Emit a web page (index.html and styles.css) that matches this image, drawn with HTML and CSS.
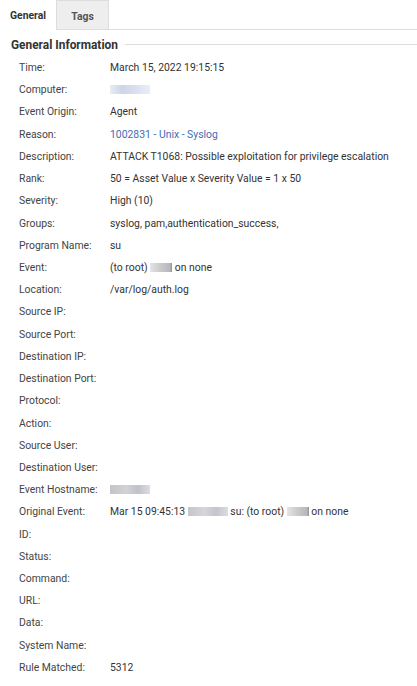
FILE: index.html
```html
<!DOCTYPE html>
<html>
<head>
<meta charset="utf-8">
<link rel="stylesheet" href="styles.css">
</head>
<body>
<div class="tabs">
  <div class="tab active">General</div>
  <div class="tab">Tags</div>
  <div class="tab-fill"></div>
</div>
<div class="section">
  <div class="heading"><span class="heading-text">General Information</span><span class="heading-line"></span></div>
  <div class="rows">
    <div class="row"><span class="label">Time:</span><span class="value">March 15, 2022 19:15:15</span></div>
    <div class="row"><span class="label">Computer:</span><span class="value"><span class="blur b-comp"></span></span></div>
    <div class="row"><span class="label">Event Origin:</span><span class="value">Agent</span></div>
    <div class="row"><span class="label">Reason:</span><span class="value link">1002831 - Unix - Syslog</span></div>
    <div class="row"><span class="label">Description:</span><span class="value">ATTACK T1068: Possible exploitation for privilege escalation</span></div>
    <div class="row"><span class="label">Rank:</span><span class="value">50 = Asset Value x Severity Value = 1 x 50</span></div>
    <div class="row"><span class="label">Severity:</span><span class="value">High (10)</span></div>
    <div class="row"><span class="label">Groups:</span><span class="value">syslog, pam,authentication_success,</span></div>
    <div class="row"><span class="label">Program Name:</span><span class="value">su</span></div>
    <div class="row"><span class="label">Event:</span><span class="value">(to root) <span class="blur b-user"></span> on none</span></div>
    <div class="row"><span class="label">Location:</span><span class="value">/var/log/auth.log</span></div>
    <div class="row"><span class="label">Source IP:</span><span class="value"></span></div>
    <div class="row"><span class="label">Source Port:</span><span class="value"></span></div>
    <div class="row"><span class="label">Destination IP:</span><span class="value"></span></div>
    <div class="row"><span class="label">Destination Port:</span><span class="value"></span></div>
    <div class="row"><span class="label">Protocol:</span><span class="value"></span></div>
    <div class="row"><span class="label">Action:</span><span class="value"></span></div>
    <div class="row"><span class="label">Source User:</span><span class="value"></span></div>
    <div class="row"><span class="label">Destination User:</span><span class="value"></span></div>
    <div class="row"><span class="label">Event Hostname:</span><span class="value"><span class="blur b-host"></span></span></div>
    <div class="row"><span class="label">Original Event:</span><span class="value">Mar 15 09:45:13 <span class="blur b-host2"></span> su: (to root) <span class="blur b-user"></span> on none</span></div>
    <div class="row"><span class="label">ID:</span><span class="value"></span></div>
    <div class="row"><span class="label">Status:</span><span class="value"></span></div>
    <div class="row"><span class="label">Command:</span><span class="value"></span></div>
    <div class="row"><span class="label">URL:</span><span class="value"></span></div>
    <div class="row"><span class="label">Data:</span><span class="value"></span></div>
    <div class="row"><span class="label">System Name:</span><span class="value"></span></div>
    <div class="row"><span class="label">Rule Matched:</span><span class="value">5312</span></div>
  </div>
</div>
</body>
</html>
```
FILE: styles.css
```css
html, body {
  margin: 0;
  padding: 0;
  background: #fff;
}
body {
  font-family: Roboto, "Liberation Sans", Arial, sans-serif;
  font-size: 10.4px;
  color: #333;
  width: 417px;
  overflow: hidden;
}
.tabs {
  display: flex;
  height: 30px;
}
.tab {
  box-sizing: border-box;
  height: 30px;
  line-height: 32px;
  font-weight: 700;
  font-size: 10.4px;
  color: #444;
  text-align: center;
}
.tab.active {
  width: 57px;
  background: #fff;
  border-right: 1px solid #ddd;
  color: #333;
}
.tab:not(.active) {
  width: 52px;
  background: #eee;
  border-bottom: 1px solid #ddd;
  border-right: 1px solid #ddd;
  border-top: 1px solid #ddd;
  color: #555;
}
.tab-fill {
  flex: 1;
  border-bottom: 1px solid #ddd;
}
.section {
  padding: 0 0 0 11px;
}
.heading {
  display: flex;
  align-items: center;
  height: 25px;
  margin-top: 2px;
}
.heading-text {
  font-weight: 700;
  font-size: 11.9px;
  color: #333;
  white-space: nowrap;
}
.heading-line {
  flex: 1;
  height: 1px;
  background: #ddd;
  margin-left: 7px;
}
.rows {
  padding-left: 8px;
}
.row {
  display: flex;
  line-height: 22.22px;
  height: 22.22px;
  white-space: nowrap;
}
.label {
  width: 91px;
  flex: none;
  color: #444;
}
.value {
  color: #333;
}
.link {
  color: #3f6db5;
}
.blur {
  display: inline-block;
  height: 9px;
  vertical-align: -1px;
}
.b-comp {
  width: 40px;
  background: linear-gradient(90deg, #e8ecf4, #cdd6e8 30%, #d8deee 60%, #e9eef8);
}
.b-user {
  width: 22px;
  background: linear-gradient(90deg, #e4e4e6, #c9c9cc 50%, #b8b8bc 90%, #8f8f94);
}
.b-host {
  width: 40px;
  background: linear-gradient(90deg, #c4c4c8, #d2d2d6 40%, #bfc2c9 70%, #dcdde2);
}
.b-host2 {
  width: 40px;
  background: linear-gradient(90deg, #c6c6ca, #d6d6da 40%, #c3c5cc 70%, #dcdde2);
}
```
